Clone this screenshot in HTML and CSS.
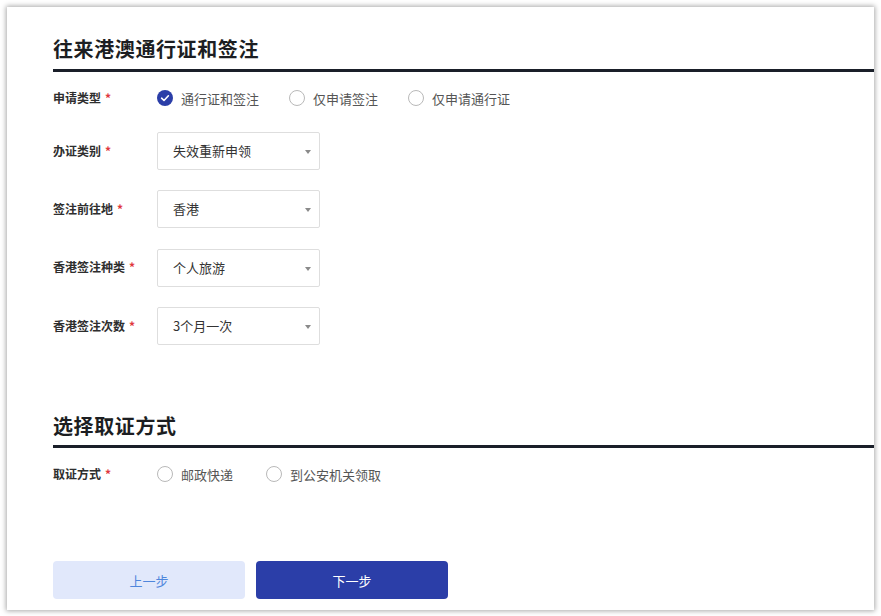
FILE: index.html
```html
<!DOCTYPE html>
<html lang="zh-CN">
<head>
<meta charset="utf-8">
<title>往来港澳通行证和签注</title>
<link rel="stylesheet" href="styles.css">
</head>
<body>
<div class="card">
  <h2 class="sec-title">往来港澳通行证和签注</h2>
  <div class="sec-line"></div>
  <div class="form">
    <div class="row row-radio">
      <div class="label">申请类型<span class="req">*</span></div>
      <div class="radios">
        <label class="radio checked"><span class="dot"><svg viewBox="0 0 16 16" width="16" height="16"><circle cx="8" cy="8" r="8" fill="#2b3ea8"/><path d="M4.6 8.2 L7 10.5 L11.4 5.8" fill="none" stroke="#fff" stroke-width="1.6" stroke-linecap="round" stroke-linejoin="round"/></svg></span>通行证和签注</label>
        <label class="radio"><span class="dot"></span>仅申请签注</label>
        <label class="radio"><span class="dot"></span>仅申请通行证</label>
      </div>
    </div>
    <div class="selects">
      <div class="row row-select">
        <div class="label">办证类别<span class="req">*</span></div>
        <div class="select"><span>失效重新申领</span><i class="arrow"></i></div>
      </div>
      <div class="row row-select">
        <div class="label">签注前往地<span class="req">*</span></div>
        <div class="select"><span>香港</span><i class="arrow"></i></div>
      </div>
      <div class="row row-select">
        <div class="label">香港签注种类<span class="req">*</span></div>
        <div class="select"><span>个人旅游</span><i class="arrow"></i></div>
      </div>
      <div class="row row-select">
        <div class="label">香港签注次数<span class="req">*</span></div>
        <div class="select"><span>3个月一次</span><i class="arrow"></i></div>
      </div>
    </div>
  </div>

  <h2 class="sec-title sec-two">选择取证方式</h2>
  <div class="sec-line"></div>
  <div class="form">
    <div class="row row-radio">
      <div class="label">取证方式<span class="req">*</span></div>
      <div class="radios radios-wide">
        <label class="radio"><span class="dot"></span>邮政快递</label>
        <label class="radio"><span class="dot"></span>到公安机关领取</label>
      </div>
    </div>
  </div>

  <div class="actions">
    <button class="btn btn-prev">上一步</button>
    <button class="btn btn-next">下一步</button>
  </div>
</div>
</body>
</html>
```

FILE: styles.css
```css
html, body {
  margin: 0;
  padding: 0;
  background: #ffffff;
}
body {
  font-family: "Noto Sans CJK SC", "Noto Sans", sans-serif;
  color: #333;
  padding: 7px;
  width: 881px;
  height: 616px;
  box-sizing: border-box;
}
.card {
  width: 867px;
  height: 603px;
  box-sizing: border-box;
  background: #fff;
  box-shadow: 0 0 5px 1px rgba(0, 0, 0, 0.34);
  padding: 28px 0 0 46px;
  display: flex;
  flex-direction: column;
}
.sec-title {
  margin: 0;
  font-size: 20px;
  line-height: 28px;
  font-weight: 700;
  color: #1c1e22;
  letter-spacing: 0.6px;
}
.sec-two {
  margin-top: 67px;
}
.sec-line {
  height: 3px;
  background: #1a1f29;
  margin-top: 6px;
}
.sec-two + .sec-line {
  margin-top: 5px;
}
.form {
  display: flex;
  flex-direction: column;
}
.row {
  display: flex;
  align-items: center;
}
.row-radio {
  margin-top: 15px;
  height: 22px;
}
.label {
  width: 104px;
  flex: none;
  font-size: 12px;
  font-weight: 700;
  color: #2e2e2e;
  margin-top: -2px;
}
.req {
  color: #e0383e;
  margin-left: 4px;
  font-weight: 700;
}
.radios {
  display: flex;
  align-items: center;
  gap: 30px;
}
.radios-wide {
  gap: 33px;
}
.radio {
  display: flex;
  align-items: center;
  font-size: 13px;
  color: #555;
}
.dot {
  width: 16px;
  height: 16px;
  box-sizing: border-box;
  border: 1px solid #b9b9b9;
  border-radius: 50%;
  margin-right: 8px;
  display: inline-block;
  flex: none;
}
.checked .dot {
  border: none;
}
.checked .dot svg {
  display: block;
}
.selects {
  display: flex;
  flex-direction: column;
  gap: 20.4px;
  margin-top: 23px;
}
.row-select {
  height: 38px;
}
.select {
  width: 163px;
  height: 38px;
  box-sizing: border-box;
  border: 1px solid #dedede;
  border-radius: 2px;
  padding: 0 8px 0 15px;
  display: flex;
  align-items: center;
  justify-content: space-between;
  font-size: 13px;
  color: #333;
}
.select span {
  margin-top: -1px;
}
.arrow {
  width: 0;
  height: 0;
  border-left: 3px solid transparent;
  border-right: 3px solid transparent;
  border-top: 4px solid #8a8a8a;
  margin-top: 2px;
}
.actions {
  margin-top: auto;
  margin-bottom: 11px;
  display: flex;
  gap: 11px;
}
.btn {
  width: 192px;
  height: 38px;
  border: none;
  border-radius: 4px;
  font-family: "Noto Sans CJK SC", "Noto Sans", sans-serif;
  font-size: 13px;
  cursor: pointer;
}
.btn-prev {
  background: #e1e8fb;
  color: #4f86dc;
}
.btn-next {
  background: #2b3ea8;
  color: #fff;
}
```
